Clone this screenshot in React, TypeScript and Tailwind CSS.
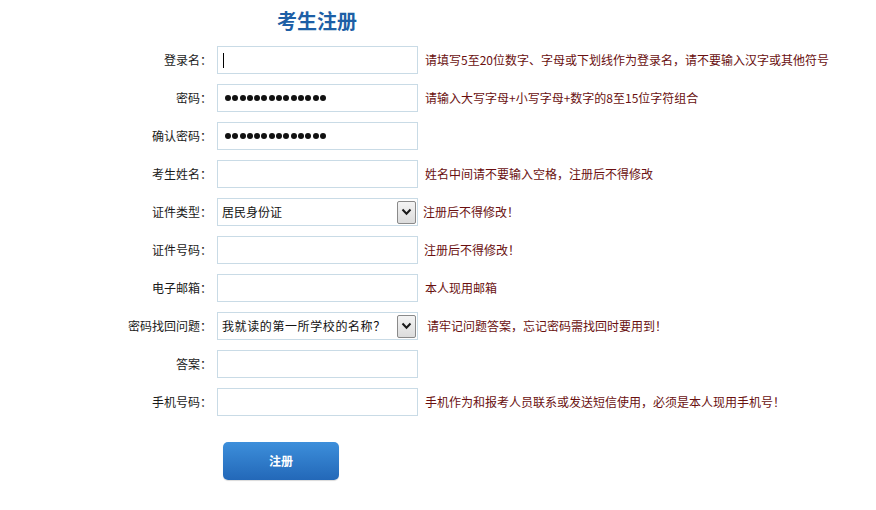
import React from "react";

const font = { fontFamily: '"Noto Sans CJK SC", "Noto Sans", sans-serif' };

function Dots() {
  return (
    <div className="flex items-center gap-[1.3px] pl-[7px]">
      {Array.from({ length: 14 }).map((_, i) => (
        <span key={i} className="block w-[6px] h-[6px] rounded-full bg-[#111]" />
      ))}
    </div>
  );
}

function Box({ children }: { children?: React.ReactNode }) {
  return (
    <div className="w-[201px] h-[28px] border border-[#c9dbe6] bg-white flex items-center shrink-0">
      {children}
    </div>
  );
}

function SelectBox({ value, tight }: { value: string; tight?: boolean }) {
  return (
    <div className="w-[201px] h-[28px] border border-[#c9dbe6] bg-white flex items-center justify-between shrink-0">
      <span className={`pl-[4px] text-[12px] text-[#111] ${tight ? "tracking-[0.6px]" : ""}`}>{value}</span>
      <span className="mr-[1px] w-[19px] h-[23px] border border-[#8a8a8a] rounded-[2px] bg-gradient-to-b from-[#f4f4f4] to-[#dcdcdc] flex items-center justify-center">
        <svg width="11" height="8" viewBox="0 0 11 8">
          <path d="M1.5 1.5 L5.5 5.8 L9.5 1.5" fill="none" stroke="#1a1a1a" strokeWidth="2" />
        </svg>
      </span>
    </div>
  );
}

function Row({ label, field, hint, hintGap = "ml-[7px]" }: { label: string; field: React.ReactNode; hint?: string; hintGap?: string }) {
  return (
    <div className="flex items-center h-[28px]">
      <div className="w-[212px] text-right text-[12px] text-[#1a1a1a]">{label}</div>
      <div className="ml-[5px]">{field}</div>
      {hint && <div className={`${hintGap} text-[12px] text-[#6a1010] whitespace-nowrap`}>{hint}</div>}
    </div>
  );
}

export default function App() {
  return (
    <div style={font} className="w-[876px] h-[510px] bg-white overflow-hidden">
      <div className="h-[46px] flex items-start">
        <div className="ml-[277px] mt-[8px] text-[20px] leading-[26px] font-bold text-[#1d5fa6]">考生注册</div>
      </div>
      <div className="flex flex-col gap-[10px]">
        <Row
          label="登录名："
          field={
            <Box>
              <span className="ml-[5px] block w-[1px] h-[15px] bg-black" />
            </Box>
          }
          hint="请填写5至20位数字、字母或下划线作为登录名，请不要输入汉字或其他符号"
        />
        <Row label="密码：" field={<Box><Dots /></Box>} hint="请输入大写字母+小写字母+数字的8至15位字符组合" />
        <Row label="确认密码：" field={<Box><Dots /></Box>} />
        <Row label="考生姓名：" field={<Box />} hint="姓名中间请不要输入空格，注册后不得修改" />
        <Row label="证件类型：" field={<SelectBox value="居民身份证" />} hint="注册后不得修改！" hintGap="ml-[5px]" />
        <Row label="证件号码：" field={<Box />} hint="注册后不得修改！" hintGap="ml-[6px]" />
        <Row label="电子邮箱：" field={<Box />} hint="本人现用邮箱" />
        <Row label="密码找回问题：" field={<SelectBox value="我就读的第一所学校的名称？" tight />} hint="请牢记问题答案，忘记密码需找回时要用到！" hintGap="ml-[9px]" />
        <Row label="答案：" field={<Box />} />
        <Row label="手机号码：" field={<Box />} hint="手机作为和报考人员联系或发送短信使用，必须是本人现用手机号！" />
      </div>
      <div className="ml-[223px] mt-[26px]">
        <button className="w-[116px] h-[38px] rounded-[5px] bg-gradient-to-b from-[#3d8fdb] to-[#2368b8] text-white text-[12px] font-bold flex items-center justify-center shadow-[0_1px_1px_rgba(0,0,0,0.15)]">
          注册
        </button>
      </div>
    </div>
  );
}
